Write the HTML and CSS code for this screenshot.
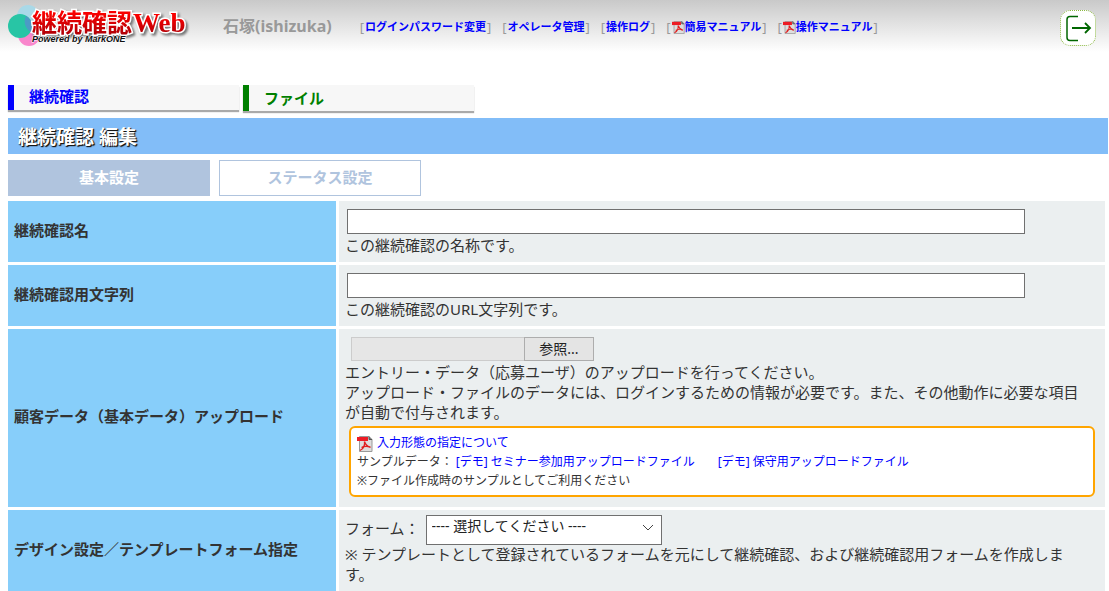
FILE: index.html
```html
<!DOCTYPE html>
<html lang="ja">
<head>
<meta charset="utf-8">
<title>継続確認Web</title>
<link rel="stylesheet" href="styles.css">
</head>
<body>
<svg class="defs" aria-hidden="true">
  <symbol id="pdf" viewBox="0 0 16 16">
    <path d="M2.500.5h9.500l3 3v12H2.500z" fill="#dedede" stroke="#999"/>
    <path d="M12 .5v3h3" fill="#777" stroke="#555"/>
    <path d="M0 1h11v4H0z" fill="#ed1c24"/>
    <path d="M7.500 5.500c1 3 3 5 6 6M7.500 5.500c.5 4-1.500 7.500-4.500 9M4.500 11.500c2.500-1.500 6-1.500 9-.5" fill="none" stroke="#e02020" stroke-width="1.300"/>
  </symbol>
</svg>
<header class="header">
  <svg class="logo" viewBox="0 0 180 44" role="img" aria-label="継続確認Web Powered by MarkONE">
    <defs>
      <linearGradient id="red" x1="0" y1="0" x2="0" y2="1">
        <stop offset="0.300" stop-color="#f80000"/><stop offset="1" stop-color="#a00008"/>
      </linearGradient>
    </defs>
    <circle cx="20" cy="12" r="11" fill="#a9d9e8"/>
    <circle cx="21" cy="31" r="11" fill="#f986cc"/>
    <circle cx="12" cy="22" r="12" fill="#28c5a5"/>
    <path d="M18 12a12 12 0 0 1 5 16a12 12 0 0 1-5-16z" fill="#4b9bc5"/>
    <text class="logo-kanji logo-face" x="24" y="28">継続確認</text>
    <text class="logo-web logo-face" x="125" y="28">Web</text>
    <text class="logo-sub" x="24" y="38">Powered by MarkONE</text>
  </svg>
  <span class="user">石塚(ishizuka)</span>
  <nav class="links">
    <span>[<a href="#">ログインパスワード変更</a>]</span>
    <span>[<a href="#">オペレータ管理</a>]</span>
    <span>[<a href="#">操作ログ</a>]</span>
    <span>[<a href="#"><svg class="pdf-small"><use href="#pdf"/></svg>簡易マニュアル</a>]</span>
    <span>[<a href="#"><svg class="pdf-small"><use href="#pdf"/></svg>操作マニュアル</a>]</span>
  </nav>
  <button class="logout" type="button" aria-label="ログアウト">
    <svg viewBox="0 0 34 34" fill="none" stroke="#060">
      <path d="M17 5.500H9Q6 5.500 6 8.500v18q0 3 3 3h8" stroke-width="1.500" />
      <path d="M11 17h18M24 12l5 5-5 5" stroke-width="1.800" />
    </svg>
  </button>
</header>
<main class="page">
  <nav class="tabs">
    <a class="tab tab-blue" href="#">継続確認</a>
    <a class="tab tab-green" href="#">ファイル</a>
  </nav>
  <h1 class="title">継続確認 編集</h1>
  <div class="steps">
    <button class="step step-current" type="button">基本設定</button>
    <button class="step" type="button">ステータス設定</button>
  </div>
  <form class="form">
    <label class="name" for="name">継続確認名</label>
    <div class="field">
      <input class="text" id="name" type="text">
      <p>この継続確認の名称です。</p>
    </div>
    <label class="name" for="slug">継続確認用文字列</label>
    <div class="field">
      <input class="text" id="slug" type="text">
      <p>この継続確認のURL文字列です。</p>
    </div>
    <label class="name" for="file">顧客データ（基本データ）アップロード</label>
    <div class="field">
      <div class="upload">
        <input class="upload-path" id="file" type="text" readonly>
        <button class="browse" type="button">参照...</button>
      </div>
      <p>エントリー・データ（応募ユーザ）のアップロードを行ってください。<br>アップロード・ファイルのデータには、ログインするための情報が必要です。また、その他動作に必要な項目が自動で付与されます。</p>
      <div class="note">
        <div><a href="#"><svg class="pdf"><use href="#pdf"/></svg>入力形態の指定について</a></div>
        <div class="samples">サンプルデータ： <a href="#">[デモ] セミナー参加用アップロードファイル</a><a href="#">[デモ] 保守用アップロードファイル</a></div>
        <div>※ファイル作成時のサンプルとしてご利用ください</div>
      </div>
    </div>
    <label class="name" for="template">デザイン設定／テンプレートフォーム指定</label>
    <div class="field">
      <div class="picker">
        <label for="template">フォーム：</label>
        <span class="select">
          <select id="template"><option>---- 選択してください ----</option></select>
          <svg viewBox="0 0 12 8" fill="none" stroke="#444"><path d="M1 1l5 5 5-5"/></svg>
        </span>
      </div>
      <p>※ テンプレートとして登録されているフォームを元にして継続確認、および継続確認用フォームを作成します。</p>
    </div>
  </form>
</main>
</body>
</html>
```
FILE: styles.css
```css
* { box-sizing: border-box; }
body {
  margin: 0;
  background: #fff;
  color: #333;
  font: 15px/20px "Noto Sans", "Noto Sans CJK JP", sans-serif;
}
p { margin: 0; padding-right: 12px; }
a { color: #00f; text-decoration: none; }
button, input, select { font-family: inherit; border-radius: 0; }
.defs { position: absolute; width: 0; height: 0; }

.header {
  display: flex;
  align-items: flex-start;
  height: 85px;
  padding: 4px 13px 0 8px;
  background: linear-gradient(#c9c9c9, #fff 52px);
}
.logo { width: 180px; height: 44px; overflow: visible; }
.logo-kanji { font: bold 25px "Noto Sans CJK JP", sans-serif; }
.logo-web { font: bold 27px "Liberation Serif", serif; }
.logo-face {
  fill: url(#red);
  stroke: #fff;
  stroke-width: 3px;
  paint-order: stroke;
  filter: drop-shadow(2px 2px 1px #777);
}
.logo-sub {
  font: italic bold 9px "Liberation Sans", sans-serif;
  fill: #111;
  stroke: #fff;
  stroke-width: 1px;
  paint-order: stroke;
}
.user {
  margin: 12px 0 0 35px;
  color: #999;
  font-size: 16px;
  font-weight: bold;
}
.links {
  display: flex;
  gap: 11px;
  margin: 13px 0 0 28px;
  color: #999;
  font-size: 13px;
  white-space: nowrap;
}
.links span { display: flex; align-items: center; gap: 1px; }
.links a { display: flex; align-items: center; font-size: 11px; font-weight: bold; }
.pdf-small { width: 13px; height: 13px; }
.logout {
  width: 36px;
  height: 36px;
  margin: 6px 0 0 auto;
  padding: 0;
  border: 1px dotted #8ab840;
  border-radius: 10px;
  background: #fff;
}
.logout svg { display: block; width: 34px; height: 34px; }

.page { padding: 0 1px 0 8px; }
.tabs { display: flex; align-items: flex-start; gap: 4px; height: 33px; }
.tab {
  width: 231px;
  height: 25px;
  padding-left: 15px;
  border-left: 6px solid #00f;
  background: #f7f7f7;
  box-shadow: 0 2px 1px #aaa;
  font-weight: bold;
  line-height: 22px;
}
.tab-green { height: 26px; border-color: green; color: green; line-height: 26px; }
.title {
  margin: 0;
  padding: 2px 10px 0;
  background: #82bdf8;
  color: #fff;
  font-size: 19px;
  line-height: 34px;
  text-shadow: 1px 1px 1px #111, 1px 1px 1px #333;
}
.steps { display: flex; gap: 9px; padding: 6px 0 5px; }
.step {
  width: 202px;
  height: 36px;
  padding: 0 0 4px;
  border: 1px solid #b0c4de;
  background: #fff;
  color: #b0c4de;
  font-size: 15px;
  font-weight: bold;
}
.step-current { background: #b0c4de; color: #fff; }

.form {
  display: grid;
  grid-template-columns: 328px 1fr;
  gap: 3px;
  padding-right: 3px;
}
.name {
  display: flex;
  align-items: center;
  padding: 0 6px 4px;
  background: #87cefa;
  font-weight: bold;
}
.field { padding: 8px 11px 7px 6px; background: #ebeff0; }
.text {
  display: block;
  width: 678px;
  max-width: 100%;
  height: 25px;
  margin: 0 0 1px 2px;
  border: 1px solid #707070;
  background: #fff;
}
.upload { display: flex; margin: 0 0 1px 6px; }
.upload-path { width: 173px; height: 24px; border: 1px solid #ccc; border-right: 0; background: #e6e6e6; }
.browse {
  width: 70px;
  height: 24px;
  padding: 0;
  border: 1px solid #adadad;
  background: #e4e4e4;
  color: #222;
  font-size: 14px;
  line-height: 20px;
}
.note {
  margin: 4px -1px 3px 4px;
  padding: 5px 6px;
  border: 2px solid orange;
  border-radius: 6px;
  background: #fff;
  font-size: 12px;
  line-height: 19px;
}
.pdf { width: 16px; height: 16px; margin-right: 4px; vertical-align: -5px; }
.samples a + a { margin-left: 23px; }
.picker { display: flex; align-items: center; gap: 6px; margin: -3px 0 -1px; }
.picker label { padding-bottom: 4px; }
.select { display: grid; width: 236px; }
.select select, .select svg { grid-area: 1 / 1; }
.select select {
  appearance: none;
  height: 30px;
  padding: 0 5px 9px;
  border: 1px solid #707070;
  background: #fff;
  color: #222;
  font-size: 14px;
}
.select svg {
  width: 12px;
  height: 8px;
  margin: 9px 8px 0;
  justify-self: end;
  pointer-events: none;
}
```
